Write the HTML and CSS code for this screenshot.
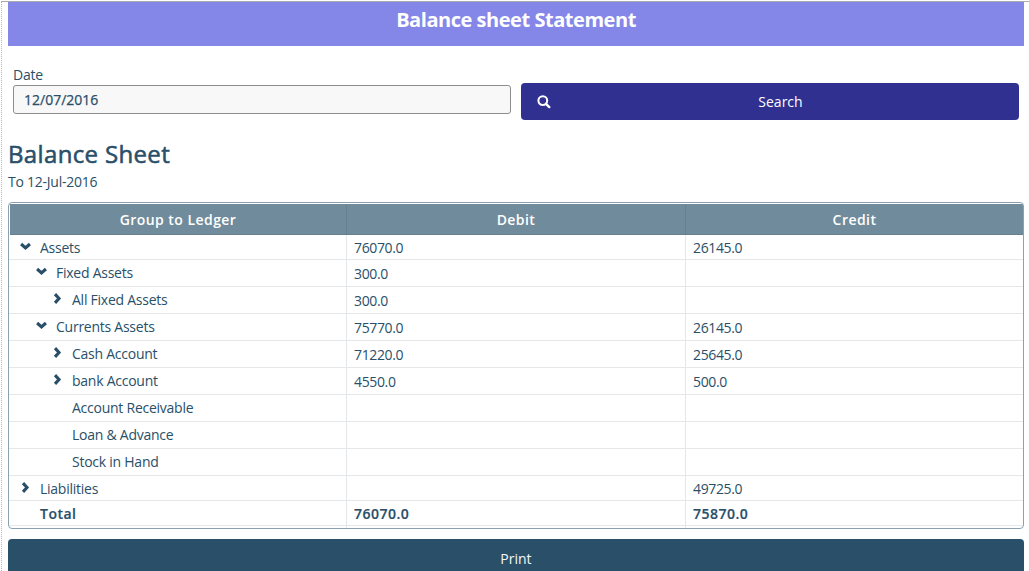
FILE: index.html
```html
<!DOCTYPE html>
<html lang="en">
<head>
<meta charset="utf-8">
<title>Balance sheet Statement</title>
<link rel="stylesheet" href="styles.css">
</head>
<body>
<svg class="defs" width="0" height="0"><defs>
<path id="chev" d="M1.1 2 L5.5 6 L9.9 2" fill="none" stroke="currentColor" stroke-width="3.1"/>
</defs></svg>
<main class="page">
  <header class="banner">Balance sheet Statement</header>
  <form class="filters">
    <div class="field">
      <label class="label" for="date">Date</label>
      <input class="date" id="date" type="text" value="12/07/2016">
    </div>
    <button class="search" type="button">
      <svg class="glass" width="14" height="14" viewBox="0 0 14 14"><circle cx="5.8" cy="5.6" r="4.4" fill="none" stroke="#fff" stroke-width="2"/><path d="M9 8.8L12.3 12.1" stroke="#fff" stroke-width="2.4" stroke-linecap="round"/></svg>
      <span class="search-text">Search</span>
    </button>
  </form>
  <h1 class="title">Balance Sheet</h1>
  <p class="subtitle">To 12-Jul-2016</p>
  <section class="table">
    <div class="row head"><div class="cell">Group to Ledger</div><div class="cell">Debit</div><div class="cell">Credit</div></div>
    <div class="row short"><div class="cell l1"><svg class="chev" viewBox="0 0 11 9"><use href="#chev"/></svg>Assets</div><div class="cell">76070.0</div><div class="cell">26145.0</div></div>
    <div class="row"><div class="cell l2"><svg class="chev" viewBox="0 0 11 9"><use href="#chev"/></svg>Fixed Assets</div><div class="cell">300.0</div><div class="cell"></div></div>
    <div class="row"><div class="cell l3"><svg class="chev closed" viewBox="0 0 11 9"><use href="#chev"/></svg>All Fixed Assets</div><div class="cell">300.0</div><div class="cell"></div></div>
    <div class="row"><div class="cell l2"><svg class="chev" viewBox="0 0 11 9"><use href="#chev"/></svg>Currents Assets</div><div class="cell">75770.0</div><div class="cell">26145.0</div></div>
    <div class="row"><div class="cell l3"><svg class="chev closed" viewBox="0 0 11 9"><use href="#chev"/></svg>Cash Account</div><div class="cell">71220.0</div><div class="cell">25645.0</div></div>
    <div class="row"><div class="cell l3"><svg class="chev closed" viewBox="0 0 11 9"><use href="#chev"/></svg>bank Account</div><div class="cell">4550.0</div><div class="cell">500.0</div></div>
    <div class="row"><div class="cell l3 leaf">Account Receivable</div><div class="cell"></div><div class="cell"></div></div>
    <div class="row"><div class="cell l3 leaf">Loan &amp; Advance</div><div class="cell"></div><div class="cell"></div></div>
    <div class="row"><div class="cell l3 leaf">Stock in Hand</div><div class="cell"></div><div class="cell"></div></div>
    <div class="row short"><div class="cell l1"><svg class="chev closed" viewBox="0 0 11 9"><use href="#chev"/></svg>Liabilities</div><div class="cell"></div><div class="cell">49725.0</div></div>
    <div class="row short total"><div class="cell l1 leaf">Total</div><div class="cell">76070.0</div><div class="cell">75870.0</div></div>
    <div class="row foot"><div class="cell"></div><div class="cell"></div><div class="cell"></div></div>
  </section>
  <button class="print" type="button">Print</button>
</main>
</body>
</html>
```
FILE: styles.css
```css
* { box-sizing: border-box; }
body {
  margin: 0;
  height: 571px;
  overflow: hidden;
  background: #fff;
  color: #294f69;
  font: 14px/20px "Open Sans", sans-serif;
  letter-spacing: -0.25px;
}
.defs { position: absolute; }
.page {
  height: 570px;
  margin: 1px 0 0 1px;
  padding: 0 5px 0 6px;
  border-top: 1px solid #aaa;
  border-left: 1px dotted #b5b5b5;
  overflow: hidden;
}
.banner {
  height: 44px;
  padding-top: 6px;
  background: #8487e8;
  color: #fff;
  text-align: center;
  font-size: 20px;
  line-height: 24px;
  font-weight: 700;
  letter-spacing: -0.46px;
}
.filters { display: flex; gap: 10px; padding: 19px 5px 0; }
.field { flex: 1 1 0; min-width: 0; }
.label { display: block; height: 20px; }
.date {
  display: block;
  width: 100%;
  height: 29px;
  padding: 0 10px;
  border: 1px solid #8b8d90;
  border-radius: 3px;
  background: #f8f8f8;
  color: #294f69;
  font: 14px "Open Sans", sans-serif;
  -webkit-text-stroke: 0.25px;
}
.search {
  width: 498px;
  display: flex;
  align-items: center;
  height: 37px;
  margin-top: 18px;
  padding: 0 16px;
  border: 0;
  border-radius: 4px;
  background: #303091;
  color: #fff;
  font: 14px "Open Sans", sans-serif;
}
.search-text { flex: 1; text-align: center; padding-left: 7px; }
.title {
  margin: 20px 0 0;
  font-size: 24px;
  line-height: 28px;
  font-weight: 400;
  letter-spacing: 0.35px;
  -webkit-text-stroke: 0.55px;
}
.subtitle { margin: 4px 0 10px; }
.table {
  border: 1px solid #8ba1af;
  border-radius: 4px;
  padding-top: 1px;
  overflow: hidden;
}
.row { display: grid; grid-template-columns: 338px 339px 1fr; height: 27px; }
.row.short { height: 25px; }
.cell {
  display: flex;
  align-items: center;
  padding: 1px 7px 0;
  border-right: 1px solid #e5e8ea;
  border-bottom: 1px solid #e5e8ea;
  letter-spacing: -0.35px;
}
.cell:last-child { border-right: 0; }
.row.head { height: 31px; }
.head .cell {
  justify-content: center;
  padding: 2px 0 0;
  border-right-color: #68818f;
  border-bottom-color: #668090;
  background: #708b9b;
  color: #fff;
  font-weight: 600;
  letter-spacing: 0.45px;
}
.head .cell:first-child { margin-left: 1px; }
.row .l1, .row .l2, .row .l3 { letter-spacing: -0.25px; padding-top: 0; padding-bottom: 1px; }
.row .l1 { padding-left: 11px; }
.row .l2 { padding-left: 27px; }
.row .l3 { padding-left: 43px; }
.row .l1.leaf { padding-left: 31px; }
.row .l3.leaf { padding-left: 63px; }
.short .cell, .short .l1 { padding-top: 2px; padding-bottom: 0; }
.chev { width: 11px; height: 9px; margin: -3px 9px 0 0; }
.closed { transform: rotate(-90deg); }
.row.total .cell { font-weight: 600; letter-spacing: 0.5px; -webkit-text-stroke: 0.2px; }
.row.foot { height: 2px; }
.foot .cell { border-bottom: 0; padding: 0; }
.print {
  display: block;
  width: 100%;
  height: 38px;
  margin-top: 10px;
  border: 0;
  border-radius: 4px 4px 0 0;
  background: #294f69;
  color: #f4f7f9;
  font: 14px "Open Sans", sans-serif;
}
```
